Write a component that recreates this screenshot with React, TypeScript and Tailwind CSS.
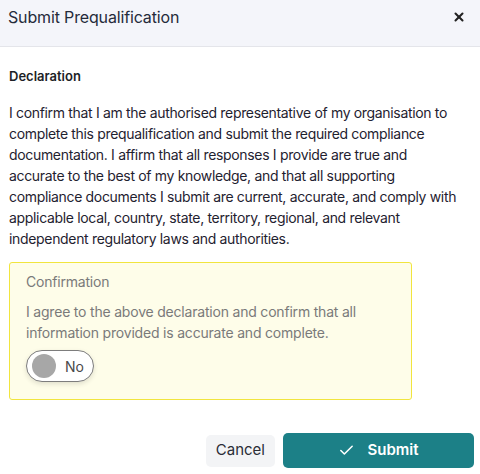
import { Check, X } from 'lucide-react';

const font = { fontFamily: "Inter, 'Noto Sans', sans-serif" };

export default function App() {
  return (
    <div className="w-[480px] h-[474px] bg-white text-[#222630] flex flex-col" style={font}>
      {/* Header */}
      <div className="h-[47px] shrink-0 bg-[#f4f5fa] border-b border-[#e4e5ea] flex items-start justify-between pl-[8px] pr-[14px] pt-[5px]">
        <h1 className="text-[16px] leading-[24px] text-[#252b3a] tracking-[-0.15px]">Submit Prequalification</h1>
        <X className="mt-[5px] w-[14px] h-[14px] text-[#222]" strokeWidth={3.5} />
      </div>

      {/* Body */}
      <div className="px-[9px] pt-[19px]">
        <h2 className="text-[13px] font-semibold text-[#1d1f26] leading-[20px]">Declaration</h2>
        <p className="mt-[16px] text-[14px] leading-[21px] tracking-[-0.33px] text-[#1f2230] whitespace-nowrap">
          I confirm that I am the authorised representative of my organisation to
          <br />
          complete this prequalification and submit the required compliance
          <br />
          documentation. I affirm that all responses I provide are true and
          <br />
          accurate to the best of my knowledge, and that all supporting
          <br />
          compliance documents I submit are current, accurate, and comply with
          <br />
          applicable local, country, state, territory, regional, and relevant
          <br />
          independent regulatory laws and authorities.
        </p>

        <div className="mt-[13px] w-[403px] rounded-[3px] border border-[#f1e53e] bg-[#fefde9] px-[16px] pt-[9px] pb-[17px]">
          <div className="text-[14px] leading-[20px] tracking-[-0.2px] text-[#7a7a7a]">Confirmation</div>
          <p className="mt-[9px] text-[14px] leading-[21px] tracking-[-0.2px] text-[#7a7a7a]">
            I agree to the above declaration and confirm that all
            <br />
            information provided is accurate and complete.
          </p>
          <div className="mt-[7px] w-[68px] h-[32px] rounded-full border border-[#7d7d7d] bg-white shadow-[0_2px_5px_rgba(0,0,0,0.12)] flex items-center pl-[5px] gap-[9px]">
            <span className="w-[24px] h-[24px] rounded-full bg-[#a7a7a7]" />
            <span className="text-[14px] text-[#4a4a4a]">No</span>
          </div>
        </div>
      </div>

      {/* Footer */}
      <div className="mt-auto pb-[6px] pr-[6px] flex justify-end items-center gap-[8px]">
        <button className="h-[32px] px-[10px] rounded-[5px] bg-[#f3f4f6] text-[15px] text-[#2a2d36]">
          Cancel
        </button>
        <button className="w-[191px] h-[35px] rounded-[5px] bg-[#1c8087] text-white text-[15px] font-semibold flex items-center justify-center gap-[12px]">
          <Check className="w-[17px] h-[17px]" strokeWidth={2.2} />
          Submit
        </button>
      </div>
    </div>
  );
}
